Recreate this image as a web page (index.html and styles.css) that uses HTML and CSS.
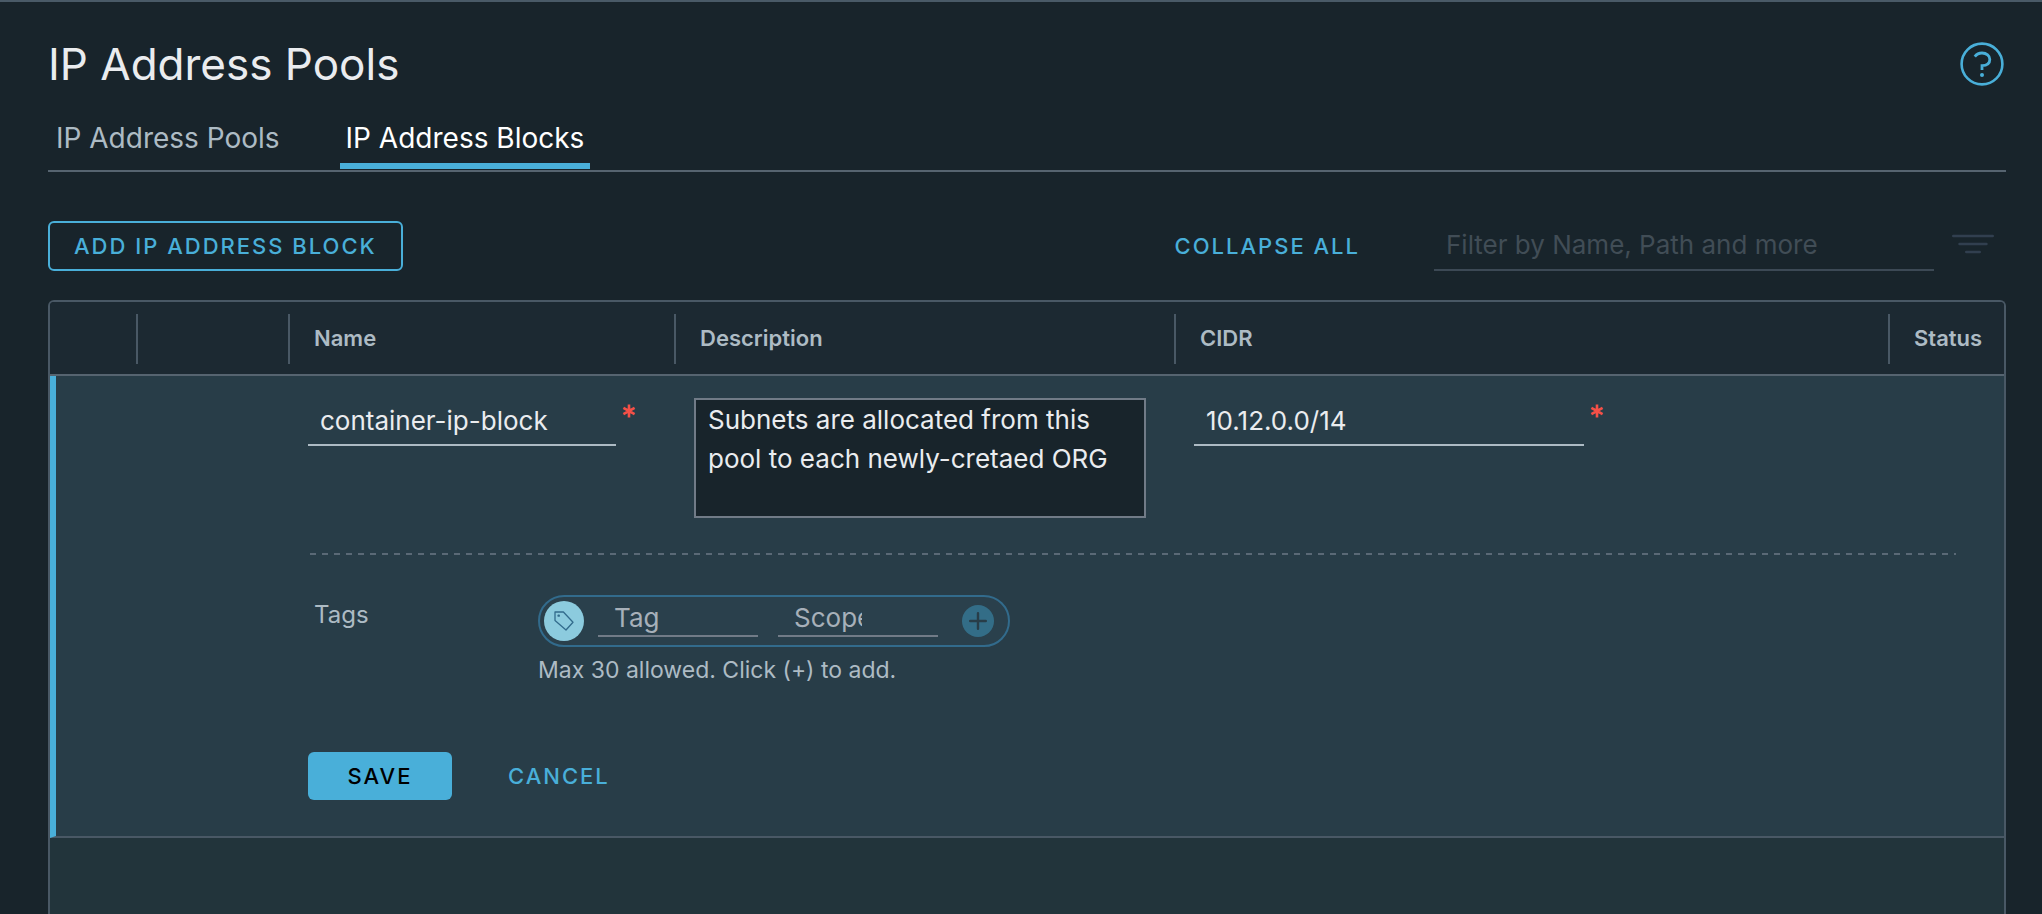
FILE: index.html
```html
<!DOCTYPE html>
<html lang="en">
<head>
<meta charset="utf-8">
<title>IP Address Pools</title>
<link rel="stylesheet" href="styles.css">
</head>
<body>
<main class="page">
  <header class="page-header">
    <h1 class="page-title">IP Address Pools</h1>
    <button class="icon-button" type="button" aria-label="Help">
      <svg class="help-icon" viewBox="0 0 44 44" fill="none" stroke="currentColor" stroke-width="2.6">
        <circle cx="22" cy="22" r="20.4"/>
        <path d="M14.800 14.600C16.600 12.200 19 11 22 11c4.600 0 7.800 2.800 7.800 6.400 0 4-3.200 6-7.800 6.200V28" stroke-width="2.800"/>
        <circle cx="22" cy="33" r="2" fill="currentColor" stroke="none"/>
      </svg>
    </button>
  </header>

  <nav class="tabs" role="tablist">
    <button class="tab" type="button" role="tab" aria-selected="false">IP Address Pools</button>
    <button class="tab tab-active" type="button" role="tab" aria-selected="true">IP Address Blocks</button>
  </nav>

  <div class="toolbar">
    <button class="btn btn-outline" type="button">ADD IP ADDRESS BLOCK</button>
    <div class="toolbar-right">
      <button class="btn btn-link" type="button">COLLAPSE ALL</button>
      <input class="filter-input" type="text" aria-label="Filter" placeholder="Filter by Name, Path and more">
      <button class="icon-button filter-button" type="button" aria-label="Filter options">
        <svg class="filter-icon" viewBox="0 0 42 20" stroke="currentColor" stroke-width="2.400" stroke-linecap="round">
          <path d="M1.200 2H40.800M7.500 10H34.500M14.200 18H27.800"/>
        </svg>
      </button>
    </div>
  </div>

  <form class="grid-frame">
    <table class="grid">
      <colgroup>
        <col class="col-expand"><col class="col-menu"><col class="col-name"><col class="col-desc"><col><col class="col-status">
      </colgroup>
      <thead>
        <tr>
          <th></th>
          <th><div class="head-cell"></div></th>
          <th scope="col"><div class="head-cell">Name</div></th>
          <th scope="col"><div class="head-cell">Description</div></th>
          <th scope="col"><div class="head-cell">CIDR</div></th>
          <th scope="col"><div class="head-cell">Status</div></th>
        </tr>
      </thead>
      <tbody>
        <tr class="edit-row">
          <td class="marker" colspan="2"></td>
          <td>
            <div class="field">
              <input class="text-input name-input" type="text" aria-label="Name" value="container-ip-block" required>
              <svg class="required" viewBox="0 0 14 14"><path d="M7 .5v13M1.400 3.800l11.200 6.400M12.600 3.800L1.400 10.200"/></svg>
            </div>
          </td>
          <td><textarea class="desc-input" aria-label="Description">Subnets are allocated from this pool to each newly-cretaed ORG</textarea></td>
          <td>
            <div class="field">
              <input class="text-input cidr-input" type="text" aria-label="CIDR" value="10.12.0.0/14" required>
              <svg class="required" viewBox="0 0 14 14"><path d="M7 .5v13M1.400 3.800l11.200 6.400M12.600 3.800L1.400 10.200"/></svg>
            </div>
          </td>
          <td></td>
        </tr>
        <tr class="detail-row">
          <td class="marker" colspan="2"></td>
          <td class="detail" colspan="4">
            <hr class="separator">
            <div class="tags">
              <label class="tags-label" for="tag">Tags</label>
              <div class="tags-body">
                <div class="tag-pill">
                  <span class="tag-badge">
                    <svg class="tag-icon" viewBox="0 0 20 20" fill="none" stroke="currentColor" stroke-width="1.300" stroke-linejoin="round">
                      <path d="M1 1h8.400L19 11.200 12 19 1 9.600z"/>
                      <rect x="4.200" y="4.200" width="1" height="1"/>
                    </svg>
                  </span>
                  <span class="tag-field"><input class="tag-input" id="tag" type="text" placeholder="Tag"></span>
                  <span class="tag-field"><input class="tag-input" type="text" aria-label="Scope" placeholder="Scope"></span>
                  <button class="tag-add" type="button" aria-label="Add tag">
                    <svg class="plus-icon" viewBox="0 0 18 18" stroke="currentColor" stroke-width="2.400" stroke-linecap="round"><path d="M9 1.200v15.600M1.200 9h15.600"/></svg>
                  </button>
                </div>
                <p class="hint">Max 30 allowed. Click (+) to add.</p>
              </div>
            </div>
            <div class="actions">
              <button class="btn btn-primary" type="button">SAVE</button>
              <button class="btn btn-link" type="button">CANCEL</button>
            </div>
          </td>
        </tr>
      </tbody>
    </table>
    <div class="grid-rest"></div>
  </form>
</main>
</body>
</html>
```
FILE: styles.css
```css
* {
  box-sizing: border-box;
}

body {
  margin: 0;
  background: #18242b;
  color: #adbbc4;
  font-family: Inter, "Liberation Sans", sans-serif;
}

button,
input,
textarea {
  margin: 0;
  padding: 0;
  border: 0;
  border-radius: 0;
  background: none;
  color: inherit;
  font: inherit;
  outline: 0;
}

svg {
  display: block;
}

.page {
  display: flex;
  flex-direction: column;
  min-height: 100vh;
  padding: 40px 36px 0 48px;
  border-top: 2px solid #495a67;
}

.page-header {
  display: flex;
  align-items: center;
  justify-content: space-between;
  height: 44px;
}

.page-title {
  margin: 0;
  color: #eaecef;
  font-size: 44px;
  font-weight: 400;
  line-height: 44px;
}

.icon-button {
  padding: 0;
  color: #49afd9;
}

.page-header .icon-button {
  margin-right: 2px;
}

.help-icon {
  width: 44px;
  height: 44px;
}

.tabs {
  display: flex;
  gap: 54px;
  margin-top: 34px;
  padding-left: 2px;
  border-bottom: 2px solid #566470;
}

.tab {
  margin-bottom: 1px;
  padding: 0 6px 7px;
  border-bottom: 6px solid transparent;
  color: #adbbc4;
  font-size: 28px;
  line-height: 36px;
}

.tab-active {
  border-color: #49afd9;
  color: #fff;
}

.toolbar {
  display: flex;
  align-items: center;
  justify-content: space-between;
  margin: 48px 0 29px;
}

.toolbar-right {
  display: flex;
  align-items: center;
}

.btn {
  height: 48px;
  border-radius: 6px;
  font-size: 22px;
  font-weight: 500;
  letter-spacing: 2px;
  white-space: nowrap;
}

.btn-outline {
  height: 50px;
  padding: 0 24px;
  border: 2px solid #49afd9;
  color: #49afd9;
}

.btn-link {
  color: #49afd9;
}

.btn-primary {
  width: 144px;
  background: #49afd9;
  color: #000;
}

.filter-input {
  width: 500px;
  height: 51px;
  margin-left: 74px;
  padding: 0 12px;
  border-bottom: 2px solid #3c4955;
  font-size: 26px;
}

.filter-input::placeholder {
  color: #414d56;
  opacity: 1;
}

.filter-button {
  margin: 0 12px 4px 18px;
  color: #313f4f;
}

.filter-icon {
  width: 42px;
  height: 20px;
}

.grid-frame {
  display: flex;
  flex: 1;
  flex-direction: column;
  overflow: hidden;
  border: 2px solid #495865;
  border-bottom: 0;
  border-radius: 6px 6px 0 0;
}

.grid {
  width: 100%;
  border-spacing: 0;
  table-layout: fixed;
}

.col-expand {
  width: 86px;
}

.col-menu {
  width: 152px;
}

.col-name {
  width: 386px;
}

.col-desc {
  width: 500px;
}

.col-status {
  width: 116px;
}

.grid th {
  padding: 12px 0 10px;
  border-bottom: 2px solid #566470;
  background: #1c2932;
  text-align: left;
}

.head-cell {
  height: 50px;
  padding-left: 24px;
  border-left: 2px solid #495865;
  font-size: 22px;
  font-weight: 600;
  line-height: 48px;
}

.grid td {
  padding: 0;
  background: #283d48;
  vertical-align: top;
}

.grid .edit-row td {
  padding: 22px 0 35px 20px;
}

.grid td.marker {
  border-left: 6px solid #49afd9;
}

.grid .detail-row td {
  border-bottom: 2px solid #495865;
}

.grid .detail-row .marker {
  border-bottom-width: 2px;
}

.grid .detail-row .detail {
  padding: 0 48px 36px 20px;
}

.field {
  display: flex;
  gap: 6px;
}

.text-input {
  height: 48px;
  padding: 0 12px 2px;
  border-bottom: 2px solid #adbbc4;
  color: #eaecef;
  font-size: 26px;
}

.name-input {
  width: 308px;
}

.cidr-input {
  width: 390px;
}

.required {
  width: 14px;
  height: 14px;
  margin-top: 6px;
  fill: none;
  stroke: #f55047;
  stroke-width: 2.6;
}

.desc-input {
  display: block;
  width: 452px;
  height: 120px;
  padding: 0 12px;
  border: 2px solid #717b87;
  background: #18242b;
  color: #eaecef;
  font-size: 26px;
  line-height: 39px;
  resize: none;
}

.separator {
  height: 2px;
  margin: 0 0 40px 2px;
  border: 0;
  background: repeating-linear-gradient(90deg, #5a6976 0 6px, transparent 6px 12px);
}

.tags {
  display: flex;
}

.tags-label {
  width: 230px;
  padding-left: 6px;
  font-size: 24px;
  line-height: 40px;
}

.tag-pill {
  display: flex;
  align-items: flex-start;
  width: 472px;
  height: 52px;
  padding: 4px;
  border: 2px solid #326b8c;
  border-radius: 26px;
  background: #2a404c;
}

.tag-badge {
  display: flex;
  align-items: center;
  justify-content: center;
  width: 40px;
  height: 40px;
  border-radius: 50%;
  background: #8ccbde;
  color: #326b8c;
}

.tag-icon {
  width: 20px;
  height: 20px;
}

.tag-field {
  display: flex;
  width: 160px;
  height: 36px;
  margin-left: 14px;
  padding: 0 16px;
  border-bottom: 2px solid #717b87;
}

.tag-field + .tag-field {
  margin-left: 20px;
}

.tag-input {
  width: 68px;
  height: 32px;
  font-size: 26px;
}

.tag-input::placeholder {
  color: #a7b0b9;
  opacity: 1;
}

.tag-add {
  display: flex;
  align-items: center;
  justify-content: center;
  width: 32px;
  height: 32px;
  margin: 4px 0 0 24px;
  border-radius: 50%;
  background: #336d87;
  color: #283d48;
}

.plus-icon {
  width: 18px;
  height: 18px;
}

.hint {
  margin: 9px 0 0;
  font-size: 23px;
  line-height: 28px;
}

.actions {
  display: flex;
  gap: 56px;
  margin-top: 68px;
}

.grid-rest {
  flex: 1;
  background: #22343b;
}
```
